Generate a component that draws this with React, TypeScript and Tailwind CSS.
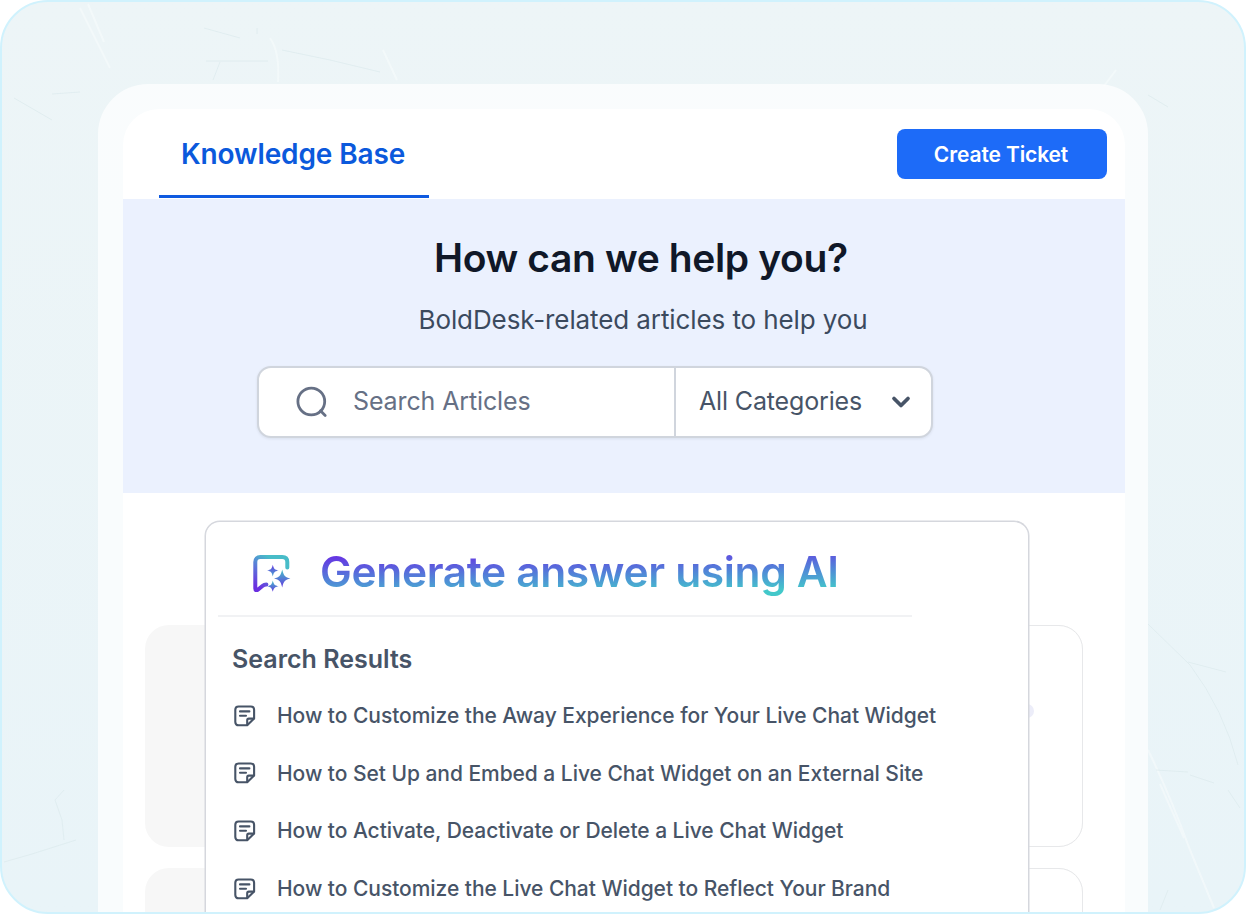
import { ChevronDown } from "lucide-react";

const articles = [
  "How to Customize the Away Experience for Your Live Chat Widget",
  "How to Set Up and Embed a Live Chat Widget on an External Site",
  "How to Activate, Deactivate or Delete a Live Chat Widget",
  "How to Customize the Live Chat Widget to Reflect Your Brand",
];

const NoteIcon = () => (
  <svg width="22" height="22" viewBox="0 0 22 22" fill="none" stroke="#475467" strokeWidth="2.1" strokeLinecap="round" strokeLinejoin="round">
    <path d="M13.2 20.3H4.6C2.6 20.3 1.3 19 1.3 17V4.8C1.3 2.8 2.6 1.5 4.6 1.5H16.8C18.8 1.5 20.1 2.8 20.1 4.8V13.4L13.2 20.3Z" />
    <path d="M13.2 20V15.2C13.2 14.2 13.8 13.6 14.8 13.6H19.8" />
    <path d="M6 6.4H15.4M6 10.8H12" />
  </svg>
);

const SparkleIcon = () => (
  <svg width="40" height="40" viewBox="0 0 40 40" fill="none">
    <defs>
      <linearGradient id="bubble" x1="6" y1="36" x2="26" y2="4" gradientUnits="userSpaceOnUse">
        <stop stopColor="#6a2fe0" />
        <stop offset="0.5" stopColor="#5a7fd8" />
        <stop offset="0.85" stopColor="#48bcc8" />
      </linearGradient>
      <linearGradient id="spark" x1="0" y1="0" x2="0" y2="1">
        <stop stopColor="#6338e0" />
        <stop offset="1" stopColor="#4aa9d0" />
      </linearGradient>
      <linearGradient id="sparkBig" x1="0" y1="0" x2="0" y2="1">
        <stop stopColor="#45c2c8" />
        <stop offset="1" stopColor="#6338e0" />
      </linearGradient>
    </defs>
    <path
      d="M35.3 15.6V10C35.3 6.8 33.5 5 30.3 5H8.3C5.1 5 3.3 6.8 3.3 10V36.6C3.3 38.4 4.6 38.8 5.8 37.8L10.4 34C11.6 33 12.6 32.6 14.4 32.6"
      stroke="url(#bubble)"
      strokeWidth="4"
      strokeLinecap="round"
      strokeLinejoin="round"
    />
    <path d="M20.8 12.8C21.9 17 22.6 17.7 26.6 18.6C22.6 19.5 21.9 20.2 20.8 24.4C19.7 20.2 19 19.5 15 18.6C19 17.7 19.7 17 20.8 12.8Z" fill="url(#spark)" />
    <path d="M30.2 17.6C31.9 24.3 33 25.3 38.4 26.6C33 27.9 31.9 28.9 30.2 35.4C28.5 28.9 27.4 27.9 22 26.6C27.4 25.3 28.5 24.3 30.2 17.6Z" fill="url(#sparkBig)" />
    <path d="M20.8 28.4C21.9 32.6 22.6 33.3 26.6 34.2C22.6 35.1 21.9 35.8 20.8 39.8C19.7 35.8 19 35.1 15 34.2C19 33.3 19.7 32.6 20.8 28.4Z" fill="url(#sparkBig)" />
  </svg>
);

// faint scratches in the plaster backdrop
const Scratches = () => (
  <svg className="absolute inset-0" width="1242" height="910" viewBox="2 2 1242 910" fill="none">
    <g stroke="#f7fbfc" strokeWidth="2" opacity="0.6">
      <path d="M80 8L110 68M88 4L104 42" />
      <path d="M270 38Q280 52 278 82M383 50L397 80" />
      <path d="M1148 750Q1170 795 1190 850L1214 908" />
      <path d="M1160 784L1184 838M1104 86L1116 70" />
    </g>
    <g stroke="#dceaed" strokeWidth="1" opacity="0.7">
      <path d="M1148 624L1190 665Q1224 710 1238 765" />
      <path d="M204 28L240 38M282 50L330 60L380 72M14 98L52 120M52 94L80 92" />
      <path d="M220 62L213 80M257 28V34M206 61H268" />
      <path d="M1148 95L1168 107M1188 662L1226 672M1190 775L1214 783" />
      <path d="M64 790L55 800L62 820L64 840M4 862L32 854L76 840M1168 890L1160 910" />
      <path d="M1228 790L1240 808M1156 770L1188 772" />
    </g>
  </svg>
);

const Header = () => (
  <header className="flex h-[90px] shrink-0 items-start justify-between pl-9 pr-[18px]">
    <div className="flex h-[89px] w-[270px] items-center border-b-[3px] border-[#0f5ae0] pl-[22px] pt-[4px]">
      <span className="text-[28px] font-semibold leading-none tracking-[-0.12px] text-[#0b59dc]">Knowledge Base</span>
    </div>
    <button className="mt-5 flex h-[50px] w-[210px] items-center justify-center rounded-lg bg-[#1d6bf8] pr-[2px] pt-[2px] text-[21px] font-semibold tracking-[-0.12px] text-white">
      Create Ticket
    </button>
  </header>
);

const Hero = () => (
  <section className="flex h-[294px] shrink-0 flex-col bg-[#ebf1fe]">
    <h1 className="mt-[34px] pl-[311px] text-[39px] font-semibold leading-[50px] tracking-[-0.38px] text-[#101828]">How can we help you?</h1>
    <p className="mt-[19px] pl-[295.5px] text-[26px] leading-9 tracking-[-0.1px] text-[#3b4a5e]">BoldDesk-related articles to help you</p>
    <div className="ml-[134px] mt-7 flex h-[72px] w-[676px] rounded-[14px] border-2 border-[#d0d5dd] bg-white shadow-[0_1px_3px_rgba(16,24,40,0.08)]">
      <div className="flex w-[417px] items-center border-r-2 border-[#d0d5dd] pl-9">
        <svg width="34" height="34" viewBox="0 0 34 34" fill="none" stroke="#667085" strokeWidth="2.8" strokeLinecap="round">
          <circle cx="16.3" cy="16.5" r="13.4" />
          <path d="M25.5 25.8L30.2 30.5" />
        </svg>
        <span className="pl-6 text-[25px] tracking-[-0.12px] text-[#667085]">Search Articles</span>
      </div>
      <div className="flex flex-1 items-center justify-between pl-[23px] pr-[16px]">
        <span className="text-[25px] tracking-[-0.15px] text-[#475467]">All Categories</span>
        <ChevronDown size={28} strokeWidth={3.2} className="text-[#475467]" />
      </div>
    </div>
  </section>
);

const Results = () => (
  <div className="absolute left-[82px] top-[28px] flex h-[420px] w-[824px] flex-col rounded-t-[15px] border-[1.5px] border-b-0 border-[#d5d7dd] bg-white shadow-[0_0_0_0.5px_#d5d7dd]">
    <div className="ml-3 flex h-[95px] w-[694px] items-center border-b-2 border-[#f1f2f4] pl-[34px] pt-[7px]">
      <SparkleIcon />
      <h2 className="ml-[28px] bg-linear-[178.5deg,#6633e3_18%,#4f8fd6_58%,#43c8ca_84%] bg-clip-text text-[42.5px] font-semibold leading-[56px] tracking-[-0.36px] text-transparent">
        Generate answer using AI
      </h2>
    </div>
    <h3 className="mt-[25px] pl-[26px] text-[25px] font-semibold leading-[34px] text-[#475467]">Search Results</h3>
    <ul className="mt-[11px] flex flex-col">
      {articles.map((article) => (
        <li key={article} className="flex h-[57.6px] items-center gap-[21px] pl-[28px]">
          <NoteIcon />
          <span className="text-[21px] font-medium tracking-[-0.04px] text-[#475467]">{article}</span>
        </li>
      ))}
    </ul>
  </div>
);

export default function App() {
  return (
    <main className="h-[914px] w-[1246px] overflow-hidden whitespace-nowrap bg-white font-[Inter,sans-serif]">
      <div className="relative flex h-full justify-center overflow-hidden rounded-[48px] border-2 border-[#d0f2fd] bg-linear-to-b from-[#edf5f7] to-[#e9f4f8]">
        <Scratches />
        <div className="relative mt-[82px] flex w-[1050px] flex-col rounded-t-[50px] bg-white/70 pl-[25px] pr-[23px] pt-[25px]">
          <div className="flex flex-1 flex-col overflow-hidden rounded-t-[36px] bg-white">
            <Header />
            <Hero />
            <div className="relative flex flex-1 flex-col gap-[21px] overflow-hidden pl-[22px] pt-[132px]">
              <div className="flex h-[222px] w-[938px] shrink-0 rounded-[24px] bg-[#f7f7f7]">
                <div className="ml-auto flex w-1/2 items-center justify-end rounded-r-[24px] border border-[#e7e8ea] bg-white pr-[48px]">
                  <span className="mb-[50px] h-[14px] w-[14px] rounded-full bg-[#ecedf9]" />
                </div>
              </div>
              <div className="flex h-[222px] w-[938px] shrink-0 rounded-[24px] bg-[#f7f7f7]">
                <div className="ml-auto w-1/2 rounded-r-[24px] border border-[#e7e8ea] bg-white" />
              </div>
              <Results />
            </div>
          </div>
        </div>
      </div>
    </main>
  );
}
